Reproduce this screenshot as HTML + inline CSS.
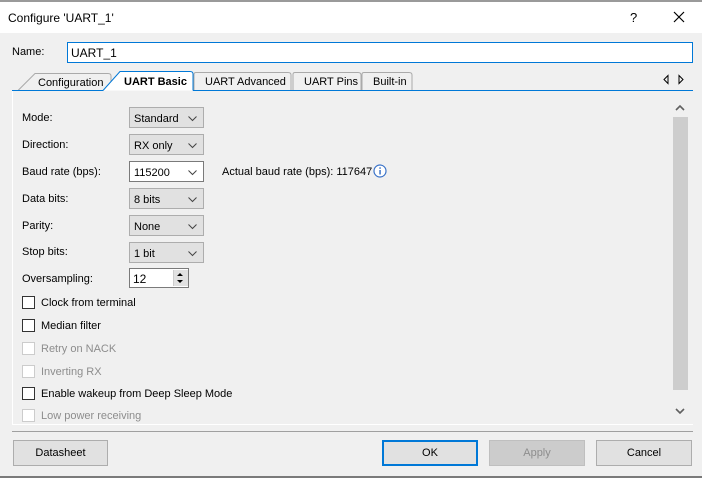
<!DOCTYPE html>
<html><head><style>
body{margin:0;width:702px;height:478px;background:#f0f0f0;font-family:"Liberation Sans",sans-serif;font-size:11px;color:#000;position:relative;overflow:hidden}
.a{position:absolute}
.lbl{position:absolute;left:22px;margin-top:1px}
.combo{position:absolute;left:129px;width:75px;height:21px;border:1px solid #adadad;background:#e1e1e1;box-sizing:border-box;padding:5px 0 0 4px}
.combo.w{background:#fff;border-color:#7a7a7a}
.combo svg{position:absolute;right:6px;top:8px}
.cb{position:absolute;left:22px;width:13px;height:13px;border:1px solid #333;background:#fff;box-sizing:border-box}
.cb.d{border-color:#ccc}
.ct{position:absolute;left:41px;margin-top:1px}
.g{color:#8d8d8d}
.btn{position:absolute;top:440px;height:26px;border:1px solid #adadad;background:#e1e1e1;box-sizing:border-box;text-align:center;line-height:25px}
</style></head><body>
<div class="a" style="left:0;top:0;width:702px;height:2px;background:#9a9a9a"></div>
<div class="a" style="left:0;top:2px;width:702px;height:31px;background:#fff"></div>
<div class="a" style="left:8px;top:11px;font-size:12px">Configure 'UART_1'</div>
<div class="a" style="left:630px;top:10px;font-size:13px">?</div>
<svg class="a" style="left:673px;top:11px" width="12" height="12"><path d="M1 1L11 11M11 1L1 11" stroke="#000" stroke-width="1.2"/></svg>
<div class="a" style="left:12px;top:46px">Name:</div>
<div class="a" style="left:67px;top:42px;width:626px;height:21px;border:1px solid #0078d7;background:#fff;box-sizing:border-box;padding:3px 0 0 3px;font-size:12px">UART_1</div>
<svg class="a" style="left:0;top:66px" width="702" height="30">
<path d="M18 24.5L35 7.5H108Q111 7.5 111 10V24" fill="#f0f0f0" stroke="#aaa"/>
<path d="M194 24V8.5Q194 6.5 196 6.5H288Q291 6.5 291 9V24" fill="#f0f0f0" stroke="#aaa"/>
<path d="M293 24V8.5Q293 6.5 295 6.5H358Q361 6.5 361 9V24" fill="#f0f0f0" stroke="#aaa"/>
<path d="M362 24V8.5Q362 6.5 364 6.5H409Q412 6.5 412 9V24" fill="#f0f0f0" stroke="#aaa"/>
<path d="M103 24.5L120 5.5H190Q193 5.5 193 8V24.5" fill="#fff" stroke="#0078d7"/>
<path d="M12 24.5H103M193 24.5H693" stroke="#0078d7"/>
<path d="M668 9.5L664 13.5L668 17.5ZM679 9.5L683 13.5L679 17.5Z" fill="none" stroke="#000"/>
</svg>
<div class="a" style="left:38px;top:77px">Configuration</div>
<div class="a" style="left:124px;top:76px;font-weight:bold">UART Basic</div>
<div class="a" style="left:205px;top:76px">UART Advanced</div>
<div class="a" style="left:304px;top:76px">UART Pins</div>
<div class="a" style="left:373px;top:76px">Built-in</div>
<div class="a" style="left:12px;top:91px;width:1px;height:334px;background:#fff"></div>
<div class="a" style="left:12px;top:424px;width:681px;height:1px;background:#fff"></div>
<div class="a" style="left:673px;top:100px;width:15px;height:322px;background:#f0f0f0"></div>
<div class="a" style="left:673px;top:117px;width:15px;height:273px;background:#cdcdcd"></div>
<svg class="a" style="left:675px;top:104px" width="10" height="8"><path d="M1 6L5 2L9 6" fill="none" stroke="#606060" stroke-width="1.6"/></svg>
<svg class="a" style="left:675px;top:407px" width="10" height="8"><path d="M1 2L5 6L9 2" fill="none" stroke="#606060" stroke-width="1.6"/></svg>

<div class="lbl" style="top:111px">Mode:</div>
<div class="combo" style="top:107px">Standard<svg width="9" height="6"><path d="M.5 .5L4.5 4.5L8.5 .5" fill="none" stroke="#444"/></svg></div>
<div class="lbl" style="top:138px">Direction:</div>
<div class="combo" style="top:134px">RX only<svg width="9" height="6"><path d="M.5 .5L4.5 4.5L8.5 .5" fill="none" stroke="#444"/></svg></div>
<div class="lbl" style="top:165px">Baud rate (bps):</div>
<div class="combo w" style="top:161px">115200<svg width="9" height="6"><path d="M.5 .5L4.5 4.5L8.5 .5" fill="none" stroke="#444"/></svg></div>
<div class="a" style="left:222px;top:166px">Actual baud rate (bps): 117647</div>
<svg class="a" style="left:373px;top:164px" width="14" height="14"><circle cx="7" cy="7" r="6" fill="#fff" stroke="#3b73c8" stroke-width="1.2"/><rect x="6.3" y="6" width="1.5" height="4.5" fill="#3b73c8"/><rect x="6.3" y="3.3" width="1.5" height="1.5" fill="#3b73c8"/></svg>
<div class="lbl" style="top:192px">Data bits:</div>
<div class="combo" style="top:188px">8 bits<svg width="9" height="6"><path d="M.5 .5L4.5 4.5L8.5 .5" fill="none" stroke="#444"/></svg></div>
<div class="lbl" style="top:219px">Parity:</div>
<div class="combo" style="top:215px">None<svg width="9" height="6"><path d="M.5 .5L4.5 4.5L8.5 .5" fill="none" stroke="#444"/></svg></div>
<div class="lbl" style="top:245px">Stop bits:</div>
<div class="combo" style="top:242px">1 bit<svg width="9" height="6"><path d="M.5 .5L4.5 4.5L8.5 .5" fill="none" stroke="#444"/></svg></div>
<div class="lbl" style="top:272px">Oversampling:</div>
<div class="a" style="left:129px;top:268px;width:60px;height:20px;border:1px solid #7a7a7a;background:#fff;box-sizing:border-box;padding:3px 0 0 3px;font-size:12px">12</div>
<div class="a" style="left:173px;top:270px;width:14px;height:16px;background:#e1e1e1;border-left:1px solid #ccc"></div>
<svg class="a" style="left:175px;top:271px" width="10" height="14"><path d="M2 5L5 2L8 5ZM2 9L5 12L8 9Z" fill="#000"/></svg>

<div class="cb" style="top:296px"></div><div class="ct" style="top:296px">Clock from terminal</div>
<div class="cb" style="top:319px"></div><div class="ct" style="top:319px">Median filter</div>
<div class="cb d" style="top:342px"></div><div class="ct g" style="top:342px">Retry on NACK</div>
<div class="cb d" style="top:365px"></div><div class="ct g" style="top:365px">Inverting RX</div>
<div class="cb" style="top:387px"></div><div class="ct" style="top:387px">Enable wakeup from Deep Sleep Mode</div>
<div class="a" style="left:12px;top:406px;width:655px;height:16px;overflow:hidden"><div class="cb d" style="left:10px;top:3px"></div><div class="ct g" style="left:29px;top:3px">Low power receiving</div></div>

<div class="a" style="left:12px;top:431px;width:681px;height:1px;background:#a0a0a0"></div>
<div class="btn" style="left:13px;width:95px">Datasheet</div>
<div class="btn" style="left:382px;width:96px;border:2px solid #0078d7;line-height:23px">OK</div>
<div class="btn" style="left:489px;width:96px;background:#ccc;border-color:#bfbfbf;color:#8d8d8d">Apply</div>
<div class="btn" style="left:596px;width:96px">Cancel</div>
<div class="a" style="left:0;top:476px;width:702px;height:2px;background:#7a7a7a"></div>
</body></html>
